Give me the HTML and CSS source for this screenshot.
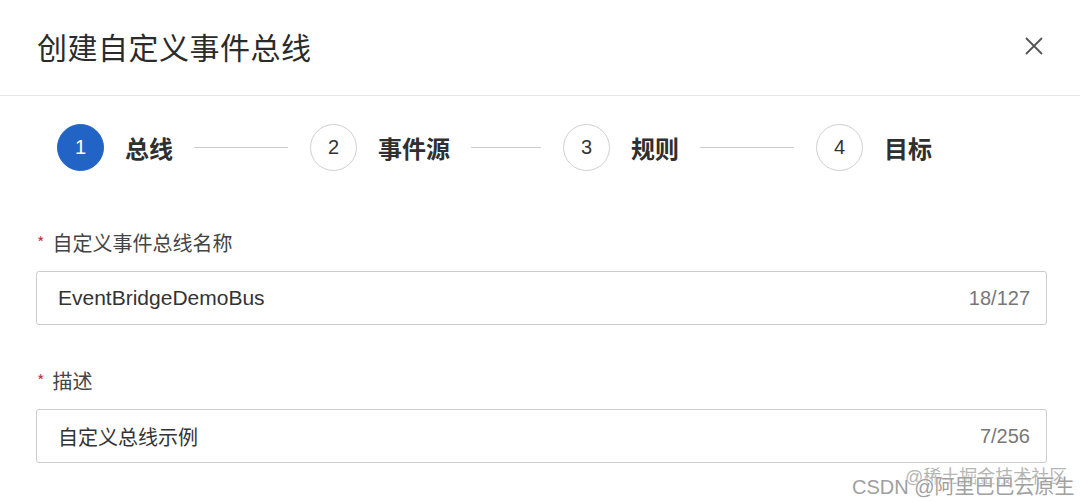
FILE: index.html
```html
<!DOCTYPE html>
<html lang="zh-CN">

<head>
	<meta charset="UTF-8">
	<title>创建自定义事件总线</title>
	<link rel="stylesheet" href="styles.css">
</head>

<body>
	<div class="dialog">
		<header class="dialog-header">
			<h1>创建自定义事件总线</h1>
			<button class="close-btn" aria-label="关闭">
				<svg width="20" height="20" viewBox="0 0 20 20">
					<path d="M2 2 L18 18 M18 2 L2 18" stroke="#555" stroke-width="1.8" fill="none" />
				</svg>
			</button>
		</header>

		<div class="steps">
			<div class="step active">
				<span class="step-num">1</span>
				<span class="step-title">总线</span>
				<span class="step-line"></span>
			</div>
			<div class="step">
				<span class="step-num">2</span>
				<span class="step-title">事件源</span>
				<span class="step-line"></span>
			</div>
			<div class="step">
				<span class="step-num">3</span>
				<span class="step-title">规则</span>
				<span class="step-line"></span>
			</div>
			<div class="step last">
				<span class="step-num">4</span>
				<span class="step-title">目标</span>
			</div>
		</div>

		<form class="form">
			<div class="form-item">
				<label class="form-label"><span class="required">*</span>自定义事件总线名称</label>
				<div class="input-box">
					<input type="text" value="EventBridgeDemoBus" />
					<span class="counter">18/127</span>
				</div>
			</div>
			<div class="form-item">
				<label class="form-label"><span class="required">*</span>描述</label>
				<div class="input-box">
					<input type="text" class="cjk" value="自定义总线示例" />
					<span class="counter">7/256</span>
				</div>
			</div>
		</form>
	</div>

	<div class="watermark wm-back">@稀土掘金技术社区</div>
	<div class="watermark wm-front">CSDN @阿里巴巴云原生</div>
</body>

</html>
```

FILE: styles.css
```css
body {
	font-family: "Liberation Sans", "Noto Sans CJK SC", sans-serif;
	margin: 0;
	padding: 0;
	background-color: #ffffff;
	color: #333333;
}

.dialog {
	width: 1080px;
	height: 502px;
	overflow: hidden;
}

.dialog-header {
	display: flex;
	justify-content: space-between;
	align-items: center;
	height: 96px;
	padding: 0 36px 4px 37px;
	box-sizing: border-box;
	border-bottom: 1px solid #e6e6e6;
}

.dialog-header h1 {
	margin: 0;
	font-size: 30px;
	font-weight: normal;
	color: #2b2b2b;
	font-family: "Noto Sans CJK SC", sans-serif;
	letter-spacing: 0.5px;
}

.close-btn {
	background: transparent;
	border: none;
	padding: 0;
	width: 20px;
	height: 20px;
	cursor: pointer;
}

.steps {
	display: flex;
	align-items: center;
	padding: 28px 0 0 57px;
}

.step {
	display: flex;
	align-items: center;
	flex: 0 0 253px;
}

.step.last {
	flex: 0 0 auto;
}

.step-num {
	width: 45px;
	height: 45px;
	border: 1px solid #cfcfcf;
	border-radius: 50%;
	display: flex;
	align-items: center;
	justify-content: center;
	font-size: 20px;
	color: #333;
}

.step.active .step-num {
	background: #2264c6;
	border-color: #2264c6;
	color: #ffffff;
}

.step-title {
	margin-left: 21px;
	font-size: 24px;
	font-weight: bold;
	color: #2f2f2f;
	font-family: "Noto Sans CJK SC", sans-serif;
}

.step-line {
	flex: 1;
	height: 1px;
	background: #cccccc;
	margin: 0 22px 0 21px;
}

.form {
	padding: 57px 33px 0 36px;
}

.form-item {
	margin-bottom: 41px;
}

.form-label {
	display: block;
	font-size: 20px;
	line-height: 28px;
	color: #444;
	font-family: "Noto Sans CJK SC", sans-serif;
	margin-bottom: 14px;
}

.required {
	color: #c7354a;
	font-size: 16px;
	margin: 0 8px 0 1px;
	vertical-align: 2px;
}

.input-box {
	display: flex;
	align-items: center;
	height: 54px;
	border: 1px solid #cccccc;
	border-radius: 3px;
	box-sizing: border-box;
	padding: 0 16px 0 21px;
}

.input-box input {
	flex: 1;
	border: none;
	outline: none;
	padding: 0;
	font-size: 21px;
	color: #333;
	font-family: "Liberation Sans", "Noto Sans CJK SC", sans-serif;
	background: transparent;
}

.input-box input.cjk {
	font-size: 20px;
	font-family: "Noto Sans CJK SC", sans-serif;
}

.counter {
	font-size: 20px;
	color: #777;
}

.watermark {
	position: absolute;
	white-space: nowrap;
	font-family: "Liberation Sans", "Noto Sans CJK SC", sans-serif;
	text-shadow: 0 0 2px #fff, 0 0 2px #fff;
}

.wm-back {
	left: 905px;
	top: 462px;
	font-size: 18px;
	color: #b5b5b5;
}

.wm-front {
	left: 852px;
	top: 471px;
	font-size: 20px;
	color: #a0a0a0;
}
```
